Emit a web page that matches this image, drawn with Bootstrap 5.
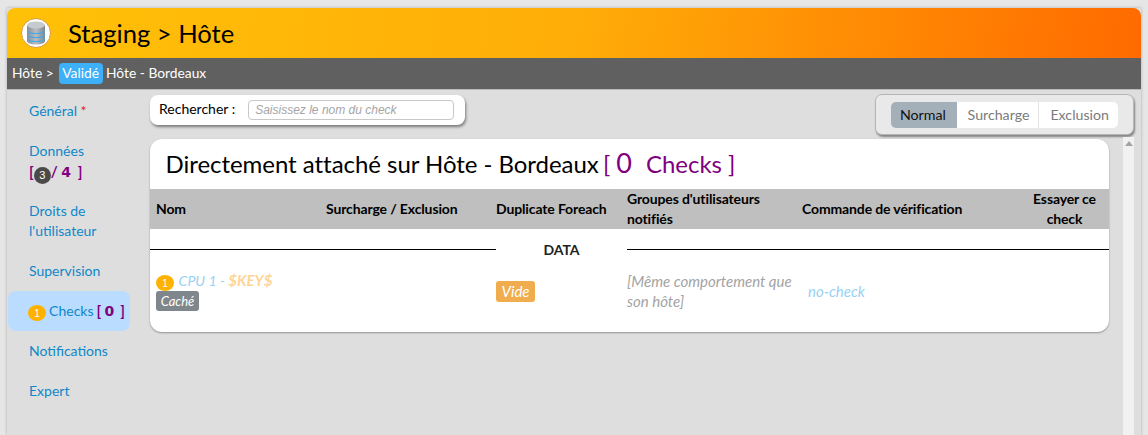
<!DOCTYPE html>
<html lang="fr">
<head>
<meta charset="utf-8">
<title>Staging > Hôte</title>
<link href="https://cdn.jsdelivr.net/npm/bootstrap@5.3.0/dist/css/bootstrap.min.css" rel="stylesheet">
<style>
html,body{height:100%;overflow:hidden}
body{background:#e6e6e6;font-family:Lato,"Liberation Sans",sans-serif;font-size:14px;color:#000;padding:8px 7px 0 7px}
.app-shell{height:100%;display:flex;flex-direction:column;box-shadow:0 0 3px rgba(0,0,0,.25);background:#dedede}
.top-head{height:50px;flex:none;border-radius:8px 8px 0 0;background:linear-gradient(100deg,#ffc107 0%,#ffad08 50%,#ff6a00 100%);padding-left:14px;gap:17px}
.logo-disc{width:30px;height:30px;border-radius:50%;background:#fff;border:1px solid #d89a3a;flex:none}
.top-title{font-size:25.6px;line-height:50px;margin:0;font-weight:400;color:#000}
.crumb-bar{height:32px;flex:none;background:#606060;color:#fff;font-size:13.8px;padding-left:5px;border-bottom:1px solid #bbb}
.valid-tag{background:#3db0f7;border-radius:4px;padding:0 3.500px;margin:0 3.500px 0 5px;color:#fff}
.main-area{flex:1;min-height:0;position:relative}
.side-menu{width:123px;flex:none;padding-top:1px}
.side-item{color:#0f87c9;text-decoration:none;padding:0 0 0 22px;line-height:20px;font-size:14px;height:40px;display:flex;flex-direction:column;justify-content:center}
.side-tall{height:60px}
.side-on{background:#b9dcff;border-radius:8px;display:block;line-height:38px;height:40px;margin-left:1px;padding-left:20px;word-spacing:-.5px}
.req-star{color:#e0212b}
.purple{color:#800080;font-weight:700;font-size:15px}
.count-num{font-family:"DejaVu Sans",sans-serif;font-size:14px;font-weight:700;margin:0 3px 0 0}
.dark-dot{display:inline-block;width:17px;height:17px;line-height:17px;margin:-3px 0;border-radius:50%;background:#4a4a4a;color:#fff;text-align:center;font-family:"Liberation Sans",sans-serif;font-size:11px;font-weight:400;vertical-align:-2px}
.amber-dot{display:inline-block;width:18px;height:16px;line-height:17px;margin:-2px 0;border-radius:50%;background:#ffb300;color:#fff;text-align:center;font-family:"Liberation Sans",sans-serif;font-size:10px;font-style:normal;vertical-align:-1px}
.content-col{width:959px;flex:none;margin-left:20px;padding-top:5px}
.search-box{height:30px;width:315px;background:#fff;border-radius:8px;box-shadow:1px 2px 3px rgba(0,0,0,.45);padding:0 0 1px 9px;gap:13px}
.search-label{margin-bottom:2px}
.search-input{width:206px;height:20px;border:1px solid #c8c8c8;border-radius:4px;font-family:"Liberation Sans",sans-serif;font-style:italic;font-size:12px;padding:0 6px;color:#999;outline:0}
.search-input::placeholder{color:#a5a5a5}
.mode-box{position:absolute;top:4px;right:7px;height:41px;width:259px;background:#e9e9e9;border:1px solid #b5b5b5;border-radius:7px;box-shadow:1px 2px 2px rgba(0,0,0,.4);padding:7px 15px}
.mode-btn{height:26px;line-height:26px;background:#fff;color:#7b7b7b;font-size:14.2px;text-align:center;border-right:1px solid #e4e4e4}
.mode-one{width:66px;background:#a3b0b9;color:#111;border-radius:5px 0 0 5px;border:0;padding-right:2px}
.mode-two{width:83px;padding-left:2px}
.mode-three{width:79px;border:0;border-radius:0 5px 5px 0;padding-left:2px}
.list-card{margin-top:14px;background:#fff;border-radius:12px;box-shadow:0 1px 2px rgba(0,0,0,.35);overflow:hidden;padding-bottom:21px}
.list-title{font-size:24px;font-weight:400;line-height:48px;height:50px;margin:0;padding-left:15.500px;letter-spacing:-.04px}
.list-title .purple{font-weight:400;font-size:24px;margin-left:-2px}
.big-zero{font-size:27px;margin:0 8px 0 0}
.chk-table{table-layout:fixed;width:959px;border-collapse:collapse}
.chk-table th{background:#bfbfbf;height:40px;padding:0 6px;line-height:20px;font-size:14px;font-weight:700;letter-spacing:-.13px;vertical-align:middle}
.chk-table td{padding:0}
.rule-line{height:1px;background:#000;margin-top:-1px}
.rule-left{margin-right:-6px}
.rule-right{margin-left:6px}
.chk-table .data-cell{height:41px;text-align:center;font-weight:700;font-size:14px;color:#222;padding-left:12px}
.row-cell{height:41px;vertical-align:middle}
.chk-table .cell-pad{padding:0 0 0 6px;line-height:20px;font-style:italic;font-size:15px;color:#a3a3a3}
.chk-name{color:#98d2f2;font-style:italic;font-size:14.200px;margin-left:1px}
.chk-key{color:#ffd595;font-weight:700;font-size:15px}
.hidden-tag{display:block;width:43px;height:20px;line-height:20px;background:#7f868c;color:#fff;border-radius:3px;text-align:center;font-size:13px;font-weight:400;font-style:italic}
.empty-tag{display:inline-block;height:21px;line-height:21px;margin-top:1px;padding:0 5.500px;background:#f0ad4e;color:#fff;border-radius:3px;font-weight:400;font-style:italic;font-size:15px}
.cmd-link{color:#98d2f2;font-style:italic;padding-left:6px}
.scroll-track{position:absolute;top:47px;right:7px;width:11px;bottom:0;background:#f1f1f1}
.scroll-arrow{width:0;height:0;border:4px solid transparent;border-bottom:5px solid #a3a3a3;border-top:0;margin:4px auto 0}
</style>
</head>
<body>
<div class="app-shell">
  <header class="top-head d-flex align-items-center">
    <span class="logo-disc d-flex align-items-center justify-content-center">
      <svg width="18" height="24" viewBox="0 0 18 24"><defs><linearGradient id="cyl" x1="0" x2="1" y1="0" y2="0"><stop offset="0" stop-color="#8a8f96"/><stop offset=".5" stop-color="#b9bec4"/><stop offset="1" stop-color="#7f858c"/></linearGradient></defs><path d="M0 4v16c0 2 4 3.500 9 3.500s9-1.500 9-3.500V4z" fill="url(#cyl)"/><ellipse cx="9" cy="4" rx="9" ry="3.500" fill="#c6cacf"/><path d="M0 9.500c1 2 4 3 9 3s8-1 9-3M0 13.500c1 2 4 3 9 3s8-1 9-3M0 17.500c1 2 4 3 9 3s8-1 9-3" fill="none" stroke="#45a9e6" stroke-width="1.100"/></svg>
    </span>
    <h1 class="top-title">Staging &gt; Hôte</h1>
  </header>
  <div class="crumb-bar d-flex align-items-center"><span>Hôte &gt;</span><span class="valid-tag">Validé</span><span>Hôte - Bordeaux</span></div>
  <div class="main-area d-flex">
    <nav class="side-menu">
      <a class="side-item" href="#"><span>Général <span class="req-star">*</span></span></a>
      <a class="side-item side-tall" href="#"><span>Données</span><span class="purple">[<span class="dark-dot">3</span>/ <span class="count-num">4</span> ]</span></a>
      <a class="side-item side-tall" href="#"><span>Droits de</span><span>l'utilisateur</span></a>
      <a class="side-item" href="#">Supervision</a>
      <a class="side-item side-on" href="#"><span class="amber-dot">1</span> Checks <span class="purple">[ <span class="count-num">0</span> ]</span></a>
      <a class="side-item" href="#">Notifications</a>
      <a class="side-item" href="#">Expert</a>
    </nav>
    <section class="content-col">
      <div class="search-box d-flex align-items-center"><span class="search-label">Rechercher :</span><input class="search-input" placeholder="Saisissez le nom du check"></div>
      <div class="list-card">
        <h2 class="list-title">Directement attaché sur Hôte - Bordeaux <span class="purple">[ <span class="big-zero">0</span> Checks ]</span></h2>
        <table class="chk-table">
          <colgroup><col style="width:170px"><col style="width:170px"><col style="width:131px"><col style="width:175px"><col style="width:224px"><col style="width:89px"></colgroup>
          <thead><tr><th>Nom</th><th>Surcharge / Exclusion</th><th>Duplicate Foreach</th><th>Groupes d'utilisateurs notifiés</th><th>Commande de vérification</th><th class="text-center">Essayer ce check</th></tr></thead>
          <tbody>
            <tr><td colspan="2"><div class="rule-line rule-left"></div></td><td class="data-cell">DATA</td><td colspan="3"><div class="rule-line rule-right"></div></td></tr>
            <tr>
              <td class="row-cell cell-pad"><span class="amber-dot">1</span> <span class="chk-name">CPU 1 - <span class="chk-key">$KEY$</span></span><span class="hidden-tag">Caché</span></td>
              <td class="row-cell"></td>
              <td class="row-cell cell-pad"><span class="empty-tag">Vide</span></td>
              <td class="row-cell cell-pad">[Même comportement que son hôte]</td>
              <td class="row-cell cell-pad"><span class="cmd-link">no-check</span></td>
              <td class="row-cell"></td>
            </tr>
          </tbody>
        </table>
      </div>
    </section>
    <div class="mode-box d-flex"><div class="mode-btn mode-one">Normal</div><div class="mode-btn mode-two">Surcharge</div><div class="mode-btn mode-three">Exclusion</div></div>
    <div class="scroll-track"><div class="scroll-arrow"></div></div>
  </div>
</div>
</body>
</html>
